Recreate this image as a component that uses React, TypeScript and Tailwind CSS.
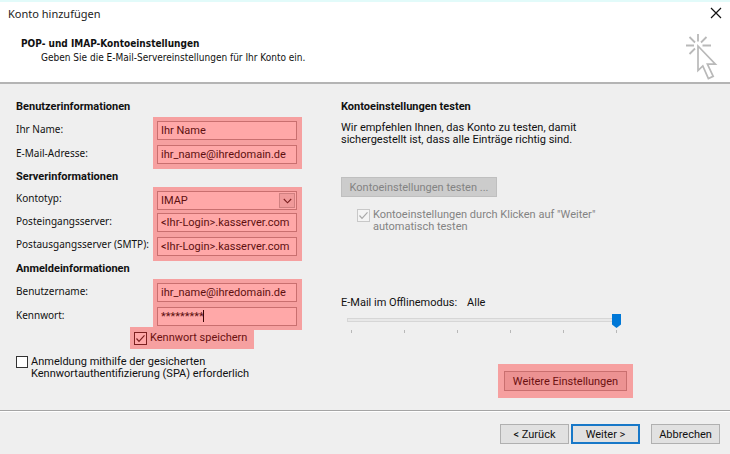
import type { ReactNode } from "react"

const fieldClass =
  "block h-[19px] w-full border border-[#c96f6f] bg-[#ffa8a8] px-[3px] text-[11px] leading-4 text-[#5e1010] outline-none"

const buttonClass =
  "flex h-5 items-center justify-center border pt-px text-[11px] leading-4 whitespace-nowrap"

const labelsClass =
  "flex w-[137px] shrink-0 flex-col font-['Noto_Sans',sans-serif] text-[10px] whitespace-nowrap"

function Section({ title, children }: { title: string; children: ReactNode }) {
  return (
    <section>
      <h2 className="h-[18px] text-[11px] leading-4 font-bold">{title}</h2>
      {children}
    </section>
  )
}

function CheckMark({ className }: { className: string }) {
  return (
    <svg
      viewBox="0 0 13 13"
      className={`pointer-events-none absolute inset-0 size-[13px] ${className}`}
      fill="none"
      stroke="currentColor"
      strokeWidth="1.2"
    >
      <path d="M2.5 6.5 5 9.3 10.5 3.3" />
    </svg>
  )
}

function PointerIcon() {
  return (
    <svg width="32" height="48" viewBox="0 0 32 48" fill="none" stroke="#b9b9b9" strokeWidth="1.8" aria-hidden="true">
      <path d="M12 0v7.5M0 11.5h8M16.5 11.5H25M3.5 3l5.5 5.5M20.5 3 15 8.5M3.5 20 9 14.5" />
      <path d="M12 12v24.5l4.8-4.6 5.6 12.6 4.8-2.2-5.8-12.1h8z" strokeWidth="1.7" />
    </svg>
  )
}

function Header() {
  return (
    <header className="border-t-2 border-b-2 border-t-[#e2fbfa] border-b-[#b4b4b4] bg-white">
      <div className="flex items-start justify-between pt-1 pr-2 pl-2">
        <h1 className="font-['Noto_Sans',sans-serif] text-[11px] leading-4 text-[#222]">Konto hinzufügen</h1>
        <button type="button" aria-label="Schließen" className="mt-px">
          <svg width="12" height="12" viewBox="0 0 12 12" stroke="#111" strokeWidth="1.2">
            <path d="M1 1l10 10M11 1 1 11" />
          </svg>
        </button>
      </div>
      <div className="flex items-start justify-between pt-3 pr-3 pl-[21px]">
        <div className="pt-[3px] font-['DejaVu_Sans_Condensed','DejaVu_Sans',sans-serif] text-[10px] leading-[14px]">
          <p className="font-bold">POP- und IMAP-Kontoeinstellungen</p>
          <p className="pl-5">Geben Sie die E-Mail-Servereinstellungen für Ihr Konto ein.</p>
        </div>
        <PointerIcon />
      </div>
    </header>
  )
}

function AccountForm() {
  return (
    <div className="w-[286px] shrink-0">
      <Section title="Benutzerinformationen">
        <div className="flex">
          <div className={`${labelsClass} leading-6`}>
            <label htmlFor="name">Ihr Name:</label>
            <label htmlFor="email">E-Mail-Adresse:</label>
          </div>
          <div className="flex flex-1 flex-col gap-[5px] bg-[#f6a0a0] pt-1 pr-[5px] pb-[5px] pl-1">
            <input id="name" className={fieldClass} defaultValue="Ihr Name" />
            <input id="email" className={fieldClass} defaultValue="ihr_name@ihredomain.de" />
          </div>
        </div>
      </Section>

      <Section title="Serverinformationen">
        <div className="flex">
          <div className={`${labelsClass} leading-[23px]`}>
            <label htmlFor="type">Kontotyp:</label>
            <label htmlFor="incoming">Posteingangsserver:</label>
            <label htmlFor="outgoing">Postausgangsserver (SMTP):</label>
          </div>
          <div className="flex flex-1 flex-col bg-[#f6a0a0] pt-1 pr-[5px] pb-[5px] pl-1">
            <div className="relative mb-[3px]">
              <select id="type" className={`${fieldClass} appearance-none`} defaultValue="IMAP">
                <option>IMAP</option>
                <option>POP3</option>
              </select>
              <span className="pointer-events-none absolute top-0.5 right-0.5 flex h-[15px] w-4 items-center justify-center border border-[#d08080] bg-[#f09a9a]">
                <svg width="9" height="6" viewBox="0 0 9 6" fill="none" stroke="#7c2020" strokeWidth="1.1">
                  <path d="M.8 1l3.7 3.8L8.2 1" />
                </svg>
              </span>
            </div>
            <div className="flex flex-col gap-[5px]">
              <input id="incoming" className={fieldClass} defaultValue="<Ihr-Login>.kasserver.com" />
              <input id="outgoing" className={fieldClass} defaultValue="<Ihr-Login>.kasserver.com" />
            </div>
          </div>
        </div>
      </Section>

      <Section title="Anmeldeinformationen">
        <div className="flex">
          <div className={`${labelsClass} leading-6`}>
            <label htmlFor="user">Benutzername:</label>
            <label htmlFor="password">Kennwort:</label>
          </div>
          <div className="flex flex-1 flex-col gap-[5px] bg-[#f6a0a0] pt-1 pr-[5px] pb-1 pl-1">
            <input id="user" className={fieldClass} defaultValue="ihr_name@ihredomain.de" />
            <div className="relative">
              <input id="password" className={fieldClass} defaultValue="*********" />
              <span className="absolute top-[3px] left-[46px] h-3 w-px bg-[#3a0505]" />
            </div>
          </div>
        </div>
      </Section>

      <label className="relative -mt-[3px] ml-[114px] flex h-[22px] w-[124px] items-center gap-[3px] bg-[#f6a0a0] pl-1 whitespace-nowrap text-[#6b1010]">
        <span className="relative size-[13px]">
          <input type="checkbox" defaultChecked className="block size-[13px] appearance-none border border-[#7c2020] bg-[#ffa8a8]" />
          <CheckMark className="text-[#7c2020]" />
        </span>
        Kennwort speichern
      </label>

      <label className="mt-[7px] flex gap-[3px] leading-3 whitespace-nowrap">
        <input type="checkbox" className="size-3 appearance-none border border-[#333] bg-white" />
        <span>
          Anmeldung mithilfe der gesicherten
          <br />
          Kennwortauthentifizierung (SPA) erforderlich
        </span>
      </label>
    </div>
  )
}

function TestPanel() {
  return (
    <div className="flex min-w-0 flex-1 flex-col items-start">
      <Section title="Kontoeinstellungen testen">
        <p className="mt-[5px] leading-3">
          Wir empfehlen Ihnen, das Konto zu testen, damit
          <br />
          sichergestellt ist, dass alle Einträge richtig sind.
        </p>
      </Section>

      <button type="button" disabled className={`${buttonClass} mt-[31px] w-[156px] border-[#bfbfbf] bg-[#cccccc] text-[#838383]`}>
        Kontoeinstellungen testen ...
      </button>
      <label className="mt-3 ml-4 flex gap-[3px] leading-3 whitespace-nowrap text-[#838383]">
        <span className="relative size-[13px] shrink-0">
          <input type="checkbox" disabled defaultChecked className="block size-[13px] appearance-none border border-[#c8c8c8] bg-[#f4f4f4]" />
          <CheckMark className="text-[#a8a8a8]" />
        </span>
        <span>
          Kontoeinstellungen durch Klicken auf "Weiter"
          <br />
          automatisch testen
        </span>
      </label>

      <div className="mt-[62px] flex gap-[10px] leading-4">
        <label htmlFor="offline">E-Mail im Offlinemodus:</label>
        <output htmlFor="offline">Alle</output>
      </div>
      <div className="mt-[3px] ml-[6px] w-[275px]">
        <div className="relative h-[15px]">
          <input id="offline" type="range" min="0" max="5" defaultValue="5" className="absolute inset-0 w-full opacity-0" />
          <div className="pointer-events-none absolute top-1 h-1 w-[273px] border border-[#d6d6d6] bg-[#e8e8e8]" />
          <svg width="9" height="14" viewBox="0 0 9 14" className="pointer-events-none absolute top-0 right-px">
            <path d="M0 0h9v10.5L4.5 14 0 10.5z" fill="#0078d7" />
          </svg>
        </div>
        <div className="mt-px flex justify-between pr-[5px] pl-1">
          {[0, 1, 2, 3, 4, 5].map((n) => (
            <span key={n} className="h-[3px] w-px bg-[#b8b8b8]" />
          ))}
        </div>
      </div>

      <div className="mt-[31px] ml-[157px] bg-[#f6a0a0] px-[6px] py-[7px]">
        <button type="button" className={`${buttonClass} w-[123px] border-[#c96f6f] bg-[#ec9292] text-[#6b1010]`}>
          Weitere Einstellungen
        </button>
      </div>
    </div>
  )
}

function Footer() {
  return (
    <footer className="border-t border-[#a5a5a5]">
      <div className="flex justify-end border-t border-white pt-3 pr-[10px] pb-[10px]">
        <button type="button" className={`${buttonClass} w-[69px] border-[#b0b0b0] bg-[#e1e1e1]`}>
          &lt; Zurück
        </button>
        <button type="button" className={`${buttonClass} ml-0.5 w-[69px] border-2 border-[#1878c8] bg-[#e1e1e1]`}>
          Weiter &gt;
        </button>
        <button type="button" className={`${buttonClass} ml-[11px] w-[69px] border-[#b0b0b0] bg-[#e1e1e1]`}>
          Abbrechen
        </button>
      </div>
    </footer>
  )
}

export default function App() {
  return (
    <div className="flex min-h-screen flex-col bg-[#efefef] font-[Roboto,sans-serif] text-[11px] text-[#111]">
      <Header />
      <main className="flex flex-1 gap-[39px] px-4 pt-[15px]">
        <AccountForm />
        <TestPanel />
      </main>
      <Footer />
    </div>
  )
}
